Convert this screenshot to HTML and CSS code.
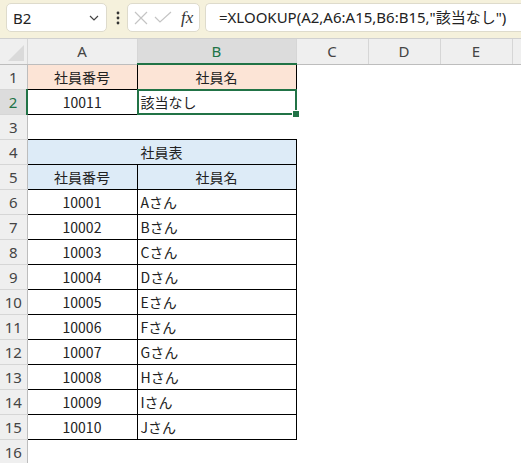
FILE: index.html
```html
<!DOCTYPE html>
<html lang="ja">
<head>
    <meta charset="UTF-8">
    <title>XLOOKUP</title>
    <link rel="stylesheet" href="styles.css">
</head>
<body>
    <div class="formula-bar">
        <div class="name-box">
            <span>B2</span>
            <svg width="12" height="8" viewBox="0 0 12 8"><path d="M2 2 L6 6 L10 2" fill="none" stroke="#444" stroke-width="1.2"/></svg>
        </div>
        <svg class="dots" width="4" height="14" viewBox="0 0 4 14"><circle cx="2" cy="2" r="1.4" fill="#333"/><circle cx="2" cy="7" r="1.4" fill="#333"/><circle cx="2" cy="12" r="1.4" fill="#333"/></svg>
        <div class="fx-box">
            <svg width="16" height="16" viewBox="0 0 16 16"><path d="M2 2 L14 14 M14 2 L2 14" stroke="#c4c4c4" stroke-width="1.2"/></svg>
            <svg width="18" height="14" viewBox="0 0 18 14"><path d="M1 6 L6 11 L17 1" fill="none" stroke="#c4c4c4" stroke-width="1.2"/></svg>
            <span class="fx">fx</span>
        </div>
        <div class="formula">=XLOOKUP(A2,A6:A15,B6:B15,"該当なし")</div>
    </div>

    <table class="sheet">
        <colgroup>
            <col class="c-row">
            <col class="c-a">
            <col class="c-b">
            <col class="c-n">
            <col class="c-n">
            <col class="c-n">
            <col class="c-end">
        </colgroup>
        <tr class="col-head">
            <th class="corner"><svg width="18" height="18" viewBox="0 0 18 18"><path d="M17 1 L17 17 L1 17 Z" fill="#dadada"/></svg></th>
            <th>A</th>
            <th class="sel">B</th>
            <th>C</th>
            <th>D</th>
            <th>E</th>
            <th></th>
        </tr>
        <tr>
            <th class="rn">1</th>
            <td class="bx peach center">社員番号</td>
            <td class="bx peach center">社員名</td>
            <td></td><td></td><td></td><td></td>
        </tr>
        <tr>
            <th class="rn sel">2</th>
            <td class="bx center">10011</td>
            <td class="bx active">該当なし</td>
            <td></td><td></td><td></td><td></td>
        </tr>
        <tr>
            <th class="rn">3</th>
            <td></td><td></td><td></td><td></td><td></td><td></td>
        </tr>
        <tr>
            <th class="rn">4</th>
            <td class="bx blue center" colspan="2">社員表</td>
            <td></td><td></td><td></td><td></td>
        </tr>
        <tr>
            <th class="rn">5</th>
            <td class="bx blue center">社員番号</td>
            <td class="bx blue center">社員名</td>
            <td></td><td></td><td></td><td></td>
        </tr>
        <tr><th class="rn">6</th><td class="bx center">10001</td><td class="bx">Aさん</td><td></td><td></td><td></td><td></td></tr>
        <tr><th class="rn">7</th><td class="bx center">10002</td><td class="bx">Bさん</td><td></td><td></td><td></td><td></td></tr>
        <tr><th class="rn">8</th><td class="bx center">10003</td><td class="bx">Cさん</td><td></td><td></td><td></td><td></td></tr>
        <tr><th class="rn">9</th><td class="bx center">10004</td><td class="bx">Dさん</td><td></td><td></td><td></td><td></td></tr>
        <tr><th class="rn">10</th><td class="bx center">10005</td><td class="bx">Eさん</td><td></td><td></td><td></td><td></td></tr>
        <tr><th class="rn">11</th><td class="bx center">10006</td><td class="bx">Fさん</td><td></td><td></td><td></td><td></td></tr>
        <tr><th class="rn">12</th><td class="bx center">10007</td><td class="bx">Gさん</td><td></td><td></td><td></td><td></td></tr>
        <tr><th class="rn">13</th><td class="bx center">10008</td><td class="bx">Hさん</td><td></td><td></td><td></td><td></td></tr>
        <tr><th class="rn">14</th><td class="bx center">10009</td><td class="bx">Iさん</td><td></td><td></td><td></td><td></td></tr>
        <tr><th class="rn">15</th><td class="bx center">10010</td><td class="bx">Jさん</td><td></td><td></td><td></td><td></td></tr>
        <tr>
            <th class="rn">16</th>
            <td></td><td></td><td></td><td></td><td></td><td></td>
        </tr>
    </table>
</body>
</html>
```

FILE: styles.css
```css
body{
    margin: 0;
    overflow: hidden;
    font-family: "Noto Sans", "Noto Sans CJK JP", sans-serif;
    background: #fff;
    color: #222;
}

.formula-bar{
    height: 39px;
    background: #f5f1dc;
    border-bottom: 1px solid #d0d0d0;
    display: flex;
    align-items: flex-start;
    padding: 3px 0 0 6px;
    box-sizing: border-box;
    overflow: hidden;
}
.name-box{
    width: 101px;
    height: 29px;
    background: #fff;
    border: 1px solid #dedbcc;
    border-radius: 5px;
    box-sizing: border-box;
    display: flex;
    align-items: center;
    justify-content: space-between;
    padding: 0 6px 0 6px;
    font-size: 15px;
    color: #222;
}
.dots{
    margin: 8px 7px 0 9px;
}
.fx-box{
    width: 73px;
    height: 29px;
    background: #fff;
    border: 1px solid #dedbcc;
    border-radius: 5px;
    box-sizing: border-box;
    display: flex;
    align-items: center;
    gap: 5px;
    padding: 0 0 0 5px;
}
.fx{
    font-family: "Liberation Serif", serif;
    font-style: italic;
    font-size: 17px;
    color: #333;
    margin-left: 4px;
}
.formula{
    flex: 1;
    min-width: 0;
    height: 29px;
    margin-left: 5px;
    background: #fff;
    border: 1px solid #dedbcc;
    border-right: none;
    border-radius: 5px 0 0 5px;
    box-sizing: border-box;
    padding-left: 13px;
    font-size: 15px;
    line-height: 27px;
    white-space: nowrap;
    overflow: hidden;
    color: #222;
}

.sheet{
    border-collapse: collapse;
    table-layout: fixed;
    width: 521px;
    font-family: "Noto Sans CJK JP", sans-serif;
    font-size: 14px;
}
.c-row{ width: 27px; }
.c-a{ width: 110px; }
.c-b{ width: 159px; }
.c-n{ width: 72px; }
.c-end{ width: 9px; }

.sheet tr{
    height: 25px;
}
.sheet td{
    padding: 0 3px;
    white-space: nowrap;
    line-height: 16px;
}
.col-head th{
    background: #efefef;
    border-right: 1px solid #d6d6d6;
    border-bottom: 1px solid #bdbdbd;
    font-family: "Noto Sans", sans-serif;
    font-weight: normal;
    font-size: 15px;
    color: #444;
    padding: 0;
}
.col-head th.sel{
    background: #dcdcdc;
    color: #217346;
    border-bottom: 2px solid #217346;
}
.corner{
    text-align: right;
    vertical-align: bottom;
}
.corner svg{
    display: block;
    margin: 0 2px 2px auto;
}
.rn{
    background: #efefef;
    border-right: 1px solid #bdbdbd;
    border-bottom: 1px solid #d6d6d6;
    font-family: "Noto Sans", sans-serif;
    font-weight: normal;
    font-size: 15px;
    color: #444;
    padding: 0;
}
.rn.sel{
    background: #dcdcdc;
    color: #217346;
    border-right: 2px solid #217346;
}

.bx{
    border: 1px solid #000;
}
.center{
    text-align: center;
}
.peach{
    background: #fce4d6;
}
.blue{
    background: #ddebf7;
}
.active{
    position: relative;
}
.active::before{
    content: "";
    position: absolute;
    left: -1px;
    top: -1px;
    right: -1px;
    bottom: -1px;
    border: 2px solid #217346;
}
.active::after{
    content: "";
    position: absolute;
    right: -4px;
    bottom: -4px;
    width: 6px;
    height: 6px;
    background: #217346;
    border: 1px solid #fff;
}
```
